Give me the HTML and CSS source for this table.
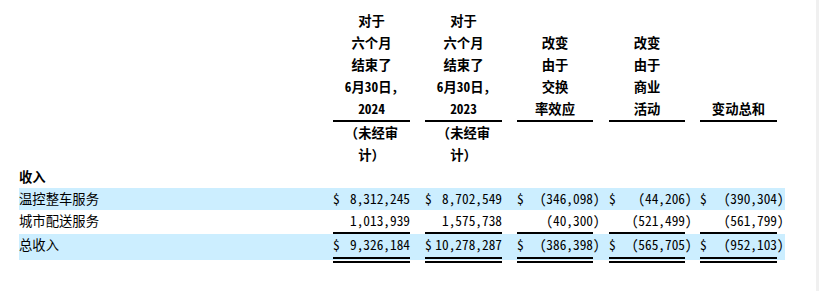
FILE: index.html
```html
<!DOCTYPE html>
<html lang="zh-CN">
<head>
<meta charset="utf-8">
<title>收入</title>
<link rel="stylesheet" href="styles.css">
</head>
<body>
<div class="page">
  <table class="fin">
    <colgroup>
      <col class="w-label">
      <col class="w77"><col class="w15">
      <col class="w77"><col class="w15">
      <col class="w76"><col class="w16">
      <col class="w76"><col class="w15">
      <col class="w77"><col class="w8">
    </colgroup>
    <thead>
      <tr class="h1">
        <th></th>
        <th class="hc">对于<br>六个月<br>结束了<br>6月30日，<br>2024</th><th class="g"></th>
        <th class="hc">对于<br>六个月<br>结束了<br>6月30日，<br>2023</th><th class="g"></th>
        <th class="hc">改变<br>由于<br>交换<br>率效应</th><th class="g"></th>
        <th class="hc">改变<br>由于<br>商业<br>活动</th><th class="g"></th>
        <th class="hc">变动总和</th><th class="g"></th>
      </tr>
      <tr class="h2">
        <th></th>
        <th class="hn">（未经审<br>计）</th><th class="g"></th>
        <th class="hn">（未经审<br>计）</th><th class="g"></th>
        <th></th><th class="g"></th>
        <th></th><th class="g"></th>
        <th></th><th class="g"></th>
      </tr>
    </thead>
    <tbody>
      <tr class="sec">
        <td class="lbl b">收入</td>
        <td colspan="10"></td>
      </tr>
      <tr class="band">
        <td class="lbl">温控整车服务</td>
        <td><div class="amt"><span>$</span><span>8,312,245</span></div></td><td></td>
        <td><div class="amt"><span>$</span><span>8,702,549</span></div></td><td></td>
        <td><div class="amt"><span>$</span><span class="neg">(346,098)</span></div></td><td></td>
        <td><div class="amt"><span>$</span><span class="neg">(44,206)</span></div></td><td></td>
        <td><div class="amt"><span>$</span><span class="neg">(390,304)</span></div></td><td></td>
      </tr>
      <tr class="sub">
        <td class="lbl">城市配送服务</td>
        <td class="ul"><div class="amt"><span></span><span>1,013,939</span></div></td><td></td>
        <td class="ul"><div class="amt"><span></span><span>1,575,738</span></div></td><td></td>
        <td class="ul"><div class="amt"><span></span><span class="neg">(40,300)</span></div></td><td></td>
        <td class="ul"><div class="amt"><span></span><span class="neg">(521,499)</span></div></td><td></td>
        <td class="ul"><div class="amt"><span></span><span class="neg">(561,799)</span></div></td><td></td>
      </tr>
      <tr class="total">
        <td class="lbl">总收入</td>
        <td class="dbl"><div class="amt"><span>$</span><span>9,326,184</span></div></td><td></td>
        <td class="dbl"><div class="amt"><span>$</span><span>10,278,287</span></div></td><td></td>
        <td class="dbl"><div class="amt"><span>$</span><span class="neg">(386,398)</span></div></td><td></td>
        <td class="dbl"><div class="amt"><span>$</span><span class="neg">(565,705)</span></div></td><td></td>
        <td class="dbl"><div class="amt"><span>$</span><span class="neg">(952,103)</span></div></td><td></td>
      </tr>
    </tbody>
  </table>
</div>
</body>
</html>
```

FILE: styles.css
```css
html, body {
  margin: 0;
  padding: 0;
  background: #ffffff;
}

body {
  min-height: 100vh;
  box-sizing: border-box;
  border-right: 3px solid #f0f0f0;
  font-family: "Noto Sans CJK SC", "Noto Sans", sans-serif;
  font-size: 13.33px;
  color: #000000;
  text-spacing-trim: space-all;
}

.page {
  padding: 10px 0 0 19px;
}

.fin {
  border-collapse: separate;
  border-spacing: 0;
  table-layout: fixed;
  width: 766px;
}

.w-label { width: 314px; }
.w77 { width: 77px; }
.w76 { width: 76px; }
.w16 { width: 16px; }
.w15 { width: 15px; }
.w8 { width: 8px; }

.fin th,
.fin td {
  padding: 0;
  line-height: 22px;
  vertical-align: top;
  white-space: nowrap;
}

.fin th {
  font-weight: 700;
  text-align: center;
}

.h1 th {
  vertical-align: bottom;
}

.h1 th.hc {
  border-bottom: 2px solid #000000;
  font-feature-settings: "hwid" 1;
}

.h2 th.hn {
  vertical-align: top;
}

.lbl {
  text-align: left;
}

.b {
  font-weight: 700;
}

.band td {
  background: #cceeff;
}

.amt {
  display: flex;
  justify-content: space-between;
  font-feature-settings: "hwid" 1;
}

.neg {
  margin-right: -0.5em;
}

.sub td.ul {
  border-bottom: 2px solid #000000;
}

.total td {
  height: 29px;
  box-sizing: border-box;
  padding-bottom: 7px;
  background: linear-gradient(#cceeff, #cceeff) no-repeat;
  background-size: 100% 26px;
  background-origin: border-box;
}

.total td.dbl {
  padding-bottom: 1px;
  border-bottom: 6px double #000000;
}
```
